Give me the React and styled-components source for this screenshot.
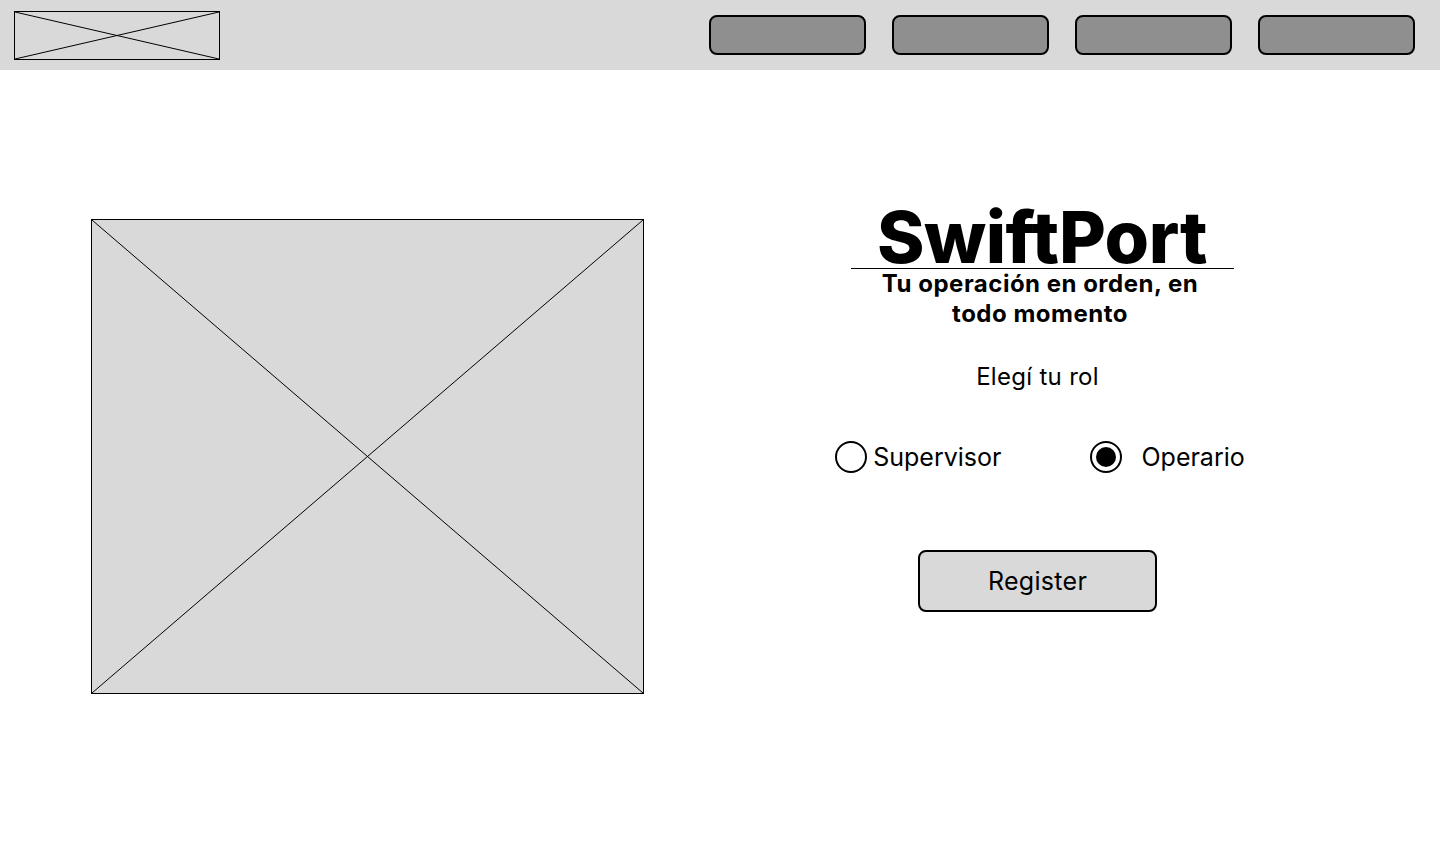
import styled, { createGlobalStyle } from "styled-components";

const GlobalStyle = createGlobalStyle`
  * { box-sizing: border-box; }
  body {
    margin: 0;
    background: #ffffff;
    font-family: Inter, "Noto Sans", sans-serif;
    color: #000;
  }
`;

const Page = styled.div`
  width: 1440px;
  min-height: 859px;
  background: #fff;
`;

const Header = styled.header`
  height: 70px;
  background: #d9d9d9;
  display: flex;
  align-items: center;
  justify-content: space-between;
  padding: 0 25px 0 14px;
`;

const Placeholder = styled.div`
  position: relative;
  width: ${(p) => p.$w}px;
  height: ${(p) => p.$h}px;
  background: #d9d9d9;
  border: 1px solid #000;

  svg {
    position: absolute;
    inset: 0;
    width: 100%;
    height: 100%;
  }
`;

const Nav = styled.nav`
  display: flex;
  gap: 26px;
`;

const NavButton = styled.button`
  width: 157px;
  height: 40px;
  background: #8f8f8f;
  border: 2px solid #000;
  border-radius: 8px;
  padding: 0;
  cursor: pointer;
`;

const Main = styled.main`
  display: flex;
`;

const Left = styled.section`
  padding: 149px 0 0 91px;
`;

const Right = styled.section`
  flex: 1;
  display: flex;
  flex-direction: column;
  align-items: center;
  padding: 136px 4px 0 0;
`;

const Title = styled.h1`
  margin: 0 0 0 4px;
  width: 383px;
  text-align: center;
  font-size: 72px;
  font-weight: 800;
  line-height: 62px;
  letter-spacing: -0.5px;
  border-bottom: 1px solid #000;
`;

const Subtitle = styled.p`
  margin: 0;
  width: 330px;
  text-align: center;
  font-size: 24px;
  font-weight: 700;
  line-height: 30px;
  letter-spacing: 0.5px;
`;

const Prompt = styled.p`
  margin: 33px 5px 0 0;
  font-size: 24px;
  font-weight: 400;
  letter-spacing: 0.3px;
  line-height: 29px;
  text-align: center;
`;

const RadioRow = styled.div`
  display: flex;
  gap: 89px;
  margin-top: 50px;
`;

const RadioLabel = styled.label`
  display: flex;
  align-items: center;
  gap: ${(p) => p.$gap}px;
  font-size: 25px;
  cursor: pointer;
`;

const RadioCircle = styled.span`
  width: 32px;
  height: 32px;
  border-radius: 50%;
  border: 2.5px solid #000;
  display: flex;
  align-items: center;
  justify-content: center;

  &::after {
    content: "";
    width: 20px;
    height: 20px;
    border-radius: 50%;
    background: #000;
    display: ${(p) => (p.$checked ? "block" : "none")};
  }
`;

const RegisterButton = styled.button`
  margin: 77px 5px 0 0;
  width: 239px;
  height: 62px;
  background: #d9d9d9;
  border: 2px solid #000;
  border-radius: 8px;
  font-family: Inter, "Noto Sans", sans-serif;
  font-size: 25px;
  letter-spacing: 0.3px;
  color: #000;
  cursor: pointer;
`;

function Cross() {
  return (
    <svg viewBox="0 0 100 100" preserveAspectRatio="none">
      <line x1="0" y1="0" x2="100" y2="100" stroke="#000" strokeWidth="1" vectorEffect="non-scaling-stroke" />
      <line x1="100" y1="0" x2="0" y2="100" stroke="#000" strokeWidth="1" vectorEffect="non-scaling-stroke" />
    </svg>
  );
}

export default function App() {
  return (
    <Page>
      <GlobalStyle />
      <Header>
        <Placeholder $w={206} $h={49}>
          <Cross />
        </Placeholder>
        <Nav>
          <NavButton />
          <NavButton />
          <NavButton />
          <NavButton />
        </Nav>
      </Header>
      <Main>
        <Left>
          <Placeholder $w={553} $h={475}>
            <Cross />
          </Placeholder>
        </Left>
        <Right>
          <Title>SwiftPort</Title>
          <Subtitle>Tu operación en orden, en todo momento</Subtitle>
          <Prompt>Elegí tu rol</Prompt>
          <RadioRow>
            <RadioLabel $gap={6}>
              <RadioCircle />
              Supervisor
            </RadioLabel>
            <RadioLabel $gap={19}>
              <RadioCircle $checked />
              Operario
            </RadioLabel>
          </RadioRow>
          <RegisterButton>Register</RegisterButton>
        </Right>
      </Main>
    </Page>
  );
}
